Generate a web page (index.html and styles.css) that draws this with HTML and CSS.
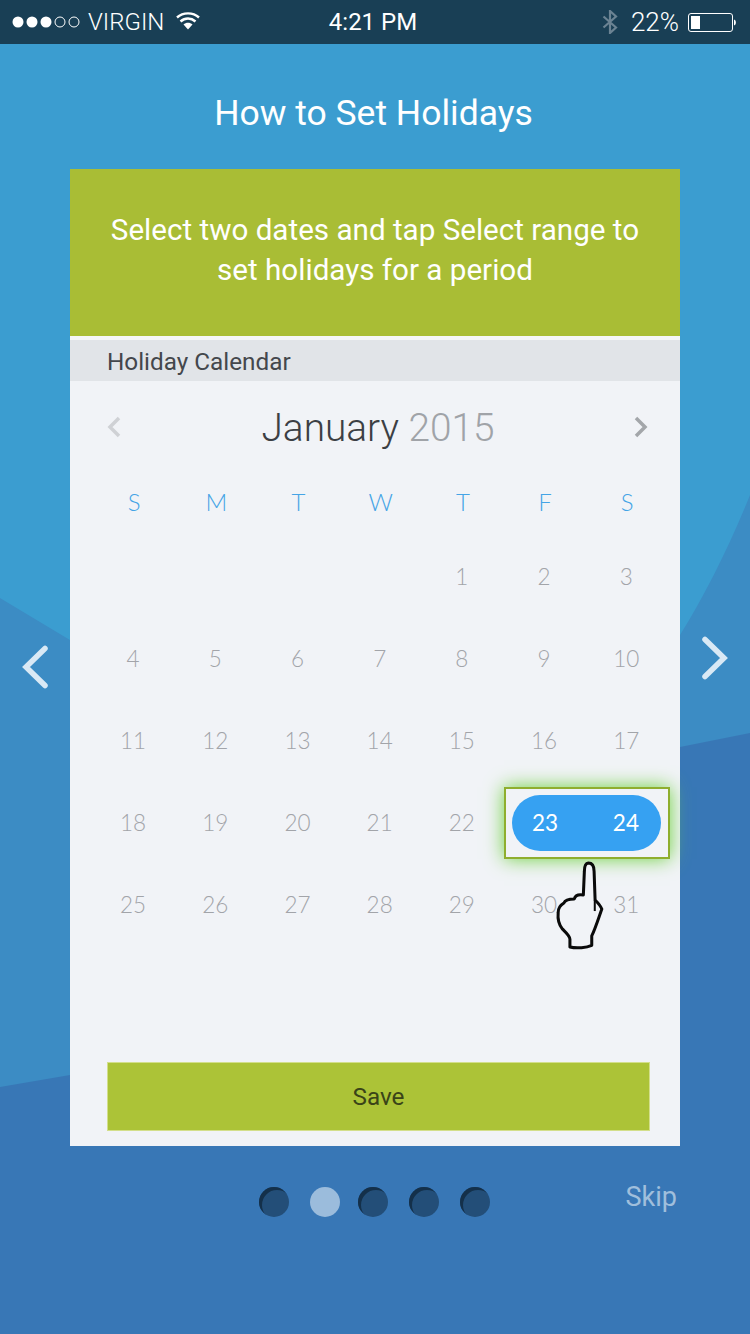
FILE: index.html
```html
<!DOCTYPE html>
<html lang="en">
<head>
<meta charset="utf-8">
<title>How to Set Holidays</title>
<link rel="stylesheet" href="styles.css">
</head>
<body>
<div class="screen">
  <svg class="backdrop" viewBox="0 0 750 1334" aria-hidden="true">
    <path class="wave-mid" d="M0 598L70 640L680 635C705 595 730 545 750 495V1334H0Z"/>
    <path class="wave-low" d="M0 1087L70 1075L680 747L750 733V1334H0Z"/>
  </svg>

  <header class="status">
    <div class="status-left">
      <svg class="signal" width="72" height="12" viewBox="0 0 72 12" aria-hidden="true">
        <circle cx="6" cy="6" r="5.5" fill="#fff"/><circle cx="20" cy="6" r="5.5" fill="#fff"/><circle cx="34" cy="6" r="5.5" fill="#fff"/>
        <circle cx="48" cy="6" r="5" fill="none" stroke="#fff"/><circle cx="62" cy="6" r="5" fill="none" stroke="#fff"/>
      </svg>
      <span class="carrier">VIRGIN</span>
      <svg class="wifi" width="24" height="19" viewBox="0 0 24 19" aria-hidden="true">
        <path d="M1 6.500C7 1 17 1 23 6.500M4.500 10.500C9 6.500 15 6.500 19.500 10.500" fill="none" stroke="#fff" stroke-width="2.400"/>
        <path d="M7.500 13.500C10 11.300 14 11.300 16.500 13.500L12 18.500Z" fill="#fff"/>
      </svg>
    </div>
    <div class="clock">4:21 PM</div>
    <div class="status-right">
      <svg class="bt" width="16" height="24" viewBox="0 0 16 24" aria-hidden="true">
        <path d="M1.500 6.500L14 17.500L8 23V1L14 6.500L1.500 17.500" fill="none" stroke="#6b8393" stroke-width="2.200"/>
      </svg>
      <span class="percent">22%</span>
      <svg class="battery" width="50" height="20" viewBox="0 0 50 20" aria-hidden="true">
        <rect x="0.500" y="0.500" width="44" height="18" rx="2.500" fill="none" stroke="#fff"/>
        <rect x="3" y="3" width="9" height="13" fill="#fff"/>
        <path d="M46 6.500C48.500 7 48.500 12 46 12.500Z" fill="#fff"/>
      </svg>
    </div>
  </header>

  <h1 class="title">How to Set Holidays</h1>

  <main class="stage">
    <svg class="side-arrow arrow-prev" width="70" height="60" viewBox="0 0 70 60" aria-hidden="true">
      <path d="M45 11.500L26 30L45 48.500" fill="none" stroke="#d9e9f5" stroke-width="5.500" stroke-linecap="round"/>
    </svg>

    <section class="card">
      <div class="banner">Select two dates and tap Select range to<br>set holidays for a period</div>
      <div class="card-label">Holiday Calendar</div>
      <div class="month-row">
        <svg width="14" height="22" viewBox="0 0 14 22" aria-hidden="true"><path d="M12 2L3 11L12 20" fill="none" stroke="#cfd1d5" stroke-width="3.500"/></svg>
        <div class="month">January <span class="year">2015</span></div>
        <svg width="14" height="22" viewBox="0 0 14 22" aria-hidden="true"><path d="M2 2L11 11L2 20" fill="none" stroke="#a3a6aa" stroke-width="3.500"/></svg>
      </div>
      <div class="week">
        <span>S</span><span>M</span><span>T</span><span>W</span><span>T</span><span>F</span><span>S</span>
      </div>
      <div class="days">
        <span class="gap-4"></span><span>1</span><span>2</span><span>3</span>
        <span>4</span><span>5</span><span>6</span><span>7</span><span>8</span><span>9</span><span>10</span>
        <span>11</span><span>12</span><span>13</span><span>14</span><span>15</span><span>16</span><span>17</span>
        <span>18</span><span>19</span><span>20</span><span>21</span><span>22</span>
        <div class="range">
          <div class="pill"><b>23</b><b>24</b></div>
          <svg class="hand" width="54" height="94" viewBox="190 250 160 280" aria-hidden="true">
            <path d="M295 265C285 266 283 278 283 290L280 360C268 358 256 360 253 372C240 372 226 374 222 384C212 390 205 398 205 412C203 432 206 448 218 462C228 472 240 482 240 492V515C260 520 290 517 305 510V482C315 462 325 430 335 402C330 390 322 382 315 375L312 290C312 278 308 265 295 265Z" fill="#f1f3f7" stroke="#0a0a0a" stroke-width="9" stroke-linejoin="round"/>
            <path d="M314 375V408" fill="none" stroke="#0a0a0a" stroke-width="6"/>
          </svg>
        </div>
        <span>25</span><span>26</span><span>27</span><span>28</span><span>29</span><span>30</span><span>31</span>
      </div>
      <button class="save" type="button">Save</button>
    </section>

    <svg class="side-arrow arrow-next" width="70" height="60" viewBox="0 0 70 60" aria-hidden="true">
      <path d="M25 11.500L44 30L25 48.500" fill="none" stroke="#d9e9f5" stroke-width="5.500" stroke-linecap="round"/>
    </svg>
  </main>

  <footer class="pager">
    <div class="dots">
      <i class="dot"></i><i class="dot dot-on"></i><i class="dot dot-tight"></i><i class="dot"></i><i class="dot"></i>
    </div>
    <span class="skip">Skip</span>
  </footer>
</div>
</body>
</html>
```
FILE: styles.css
```css
* { box-sizing: border-box; }
html, body { margin: 0; padding: 0; }
body { font-family: Roboto, "Liberation Sans", sans-serif; }

.screen {
  position: relative;
  width: 750px;
  height: 1334px;
  overflow: hidden;
  background: #3b9dd0;
}
.backdrop { position: absolute; left: 0; top: 0; width: 750px; height: 1334px; }
.wave-mid { fill: #3c8cc4; }
.wave-low { fill: #3877b6; }

.status {
  position: relative;
  height: 44px;
  background: #193f55;
  color: #fff;
  display: grid;
  grid-template-columns: 1fr auto 1fr;
  align-items: center;
  font-size: 24px;
}
.status-left { display: flex; align-items: center; padding-left: 12px; }
.signal { margin-top: -1px; }
.carrier { font-weight: 300; margin-left: 4px; }
.wifi { margin-left: 12px; margin-top: -3px; }
.clock { font-weight: 400; margin-right: 4px; }
.status-right { display: flex; align-items: center; justify-content: flex-end; padding-right: 12px; }
.percent { font-weight: 300; font-size: 26px; margin-left: 13px; }
.battery { margin-left: 9px; margin-top: 1px; }

.title {
  position: relative;
  margin: 0;
  height: 125px;
  padding: 13px 3px 0 0;
  display: flex;
  align-items: center;
  justify-content: center;
  color: #fff;
  font-size: 35.500px;
  font-weight: 400;
}

.stage { position: relative; display: flex; align-items: flex-start; }
.side-arrow { flex: none; }
.arrow-prev { margin-top: 468px; }
.arrow-next { margin-top: 459px; }

.card {
  flex: none;
  width: 610px;
  height: 977px;
  background: #f1f3f7;
  display: flex;
  flex-direction: column;
}
.banner {
  height: 167px;
  background: #a9bd35;
  color: #fff;
  font-size: 29.600px;
  line-height: 40px;
  text-align: center;
  padding-top: 41px;
}
.card-label {
  height: 45px;
  border-top: 4px solid #f5f6f8;
  background: #e1e4e8;
  color: #44474c;
  font-size: 24.300px;
  line-height: 43px;
  padding-left: 37px;
}
.month-row {
  height: 92px;
  display: flex;
  align-items: center;
  justify-content: space-between;
  padding: 0 32px 0 37px;
}
.month {
  font-size: 38.800px;
  font-weight: 300;
  color: #3c3f44;
  margin-left: 1px;
}
.year { color: #a0a3a8; }

.week, .days {
  display: grid;
  grid-template-columns: repeat(7, 82.200px);
  margin-left: 22px;
  justify-items: center;
  align-items: center;
  font-family: Lato, Roboto, sans-serif;
  font-weight: 300;
}
.week {
  height: 62px;
  padding-bottom: 5px;
  margin-left: 23px;
  font-size: 24px;
  color: #45a4e6;
}
.days {
  grid-auto-rows: 82.200px;
  font-size: 22.500px;
  color: #a2a4a9;
}
.gap-4 { grid-column: span 4; }

.range {
  position: relative;
  grid-column: span 2;
  justify-self: start;
  width: 166px;
  height: 72px;
  margin-left: 1px;
  padding: 6px;
  border: 2px solid #8fae2e;
  background: #f1f3f7;
  box-shadow: 0 0 18px #6fd13f;
}
.pill {
  width: 149px;
  height: 56px;
  border-radius: 28px;
  background: #36a1f2;
  color: #fff;
  display: flex;
  align-items: center;
  justify-content: space-between;
  padding: 0 22px 0 20px;
}
.pill b { font-weight: 400; }
.hand { position: absolute; left: 47px; top: 69px; }

.save {
  margin: auto 30px 15px 37px;
  height: 69px;
  border: 1px solid #d3df8b;
  background: #acc337;
  color: #3a4418;
  font-family: Roboto, sans-serif;
  font-size: 24.300px;
  font-weight: 400;
  padding: 0;
}

.pager {
  position: relative;
  display: flex;
  align-items: flex-start;
  padding: 41px 73px 0 259px;
}
.dots { display: flex; gap: 21px; }
.dot {
  display: block;
  width: 30px;
  height: 30px;
  border-radius: 50%;
  background: #234e78;
  box-shadow: inset 3px 3px 0 #14304a;
}
.dot-on { background: #9bbcdc; box-shadow: none; }
.dot-tight { margin-left: -3px; }
.skip {
  margin-left: auto;
  margin-top: -8px;
  color: #a0bfdc;
  font-size: 27px;
  font-weight: 400;
  line-height: 36px;
}
```
